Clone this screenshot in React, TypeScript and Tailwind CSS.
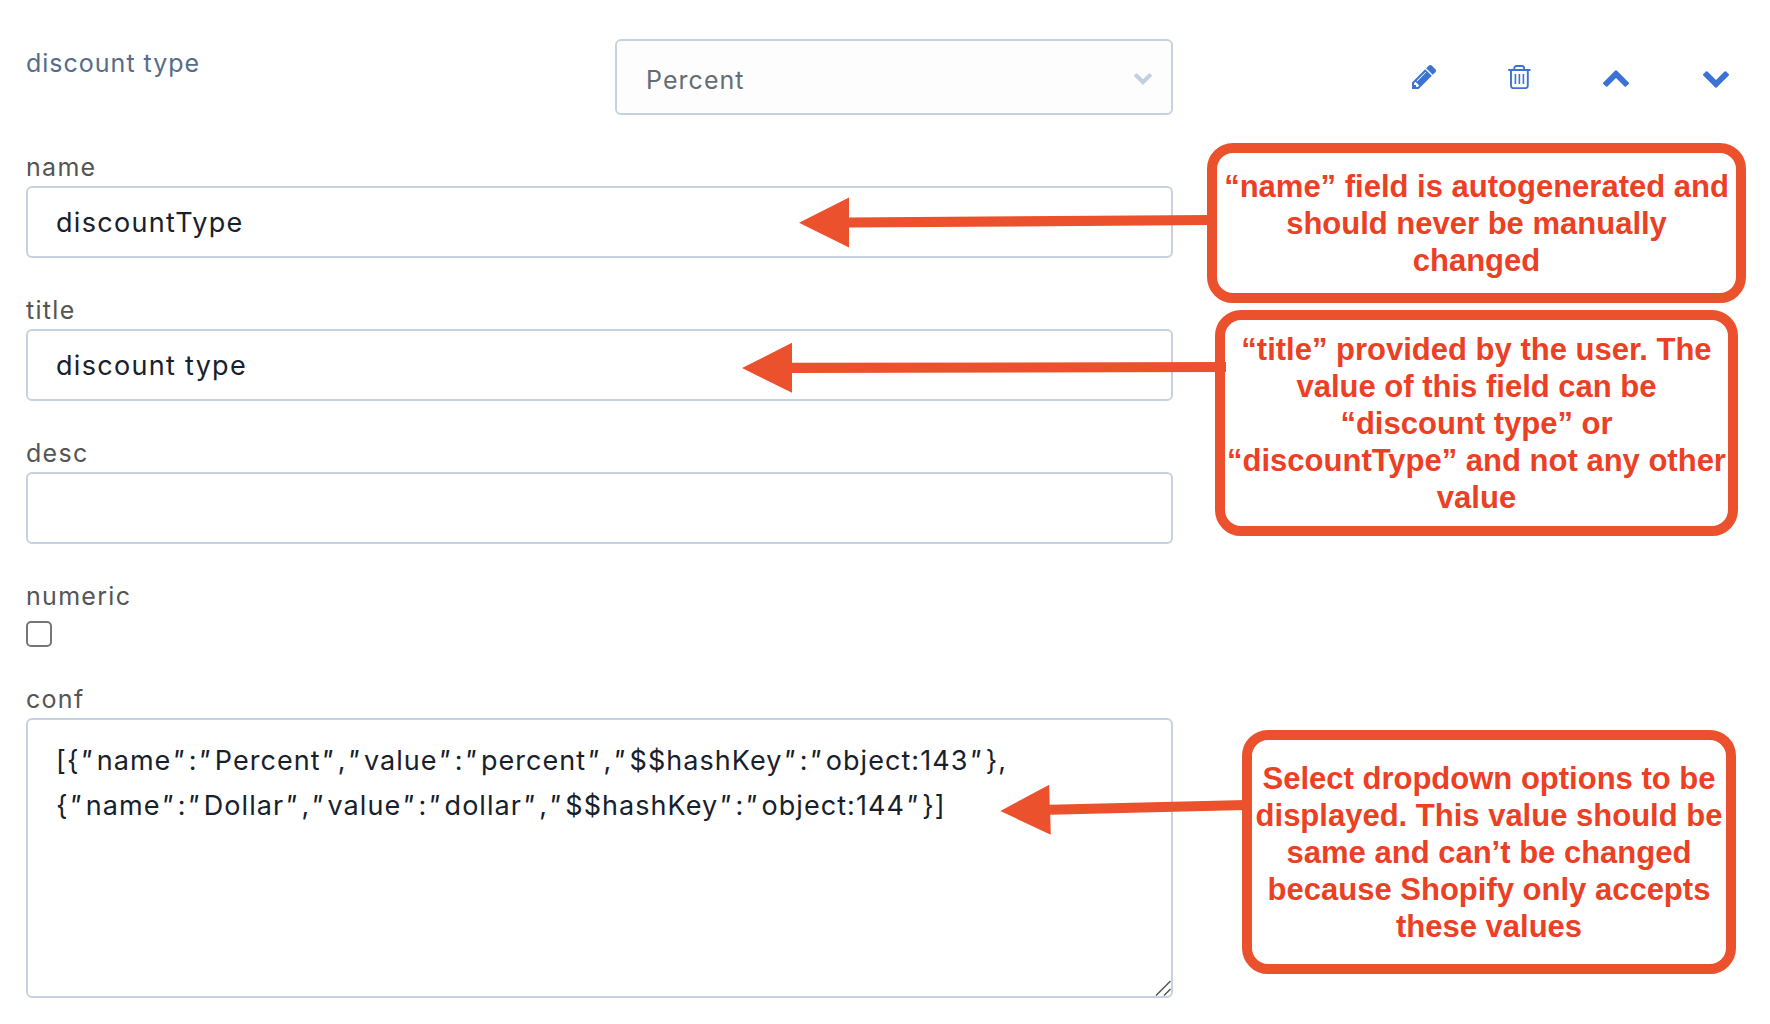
import type { ReactNode } from "react";

const CHEVRON_DOWN =
  "M1683 808l-742 741q-19 19-45 19t-45-19l-742-741q-19-19-19-45.5t19-45.5l166-165q19-19 45-19t45 19l531 531 531-531q19-19 45-19t45 19l166 165q19 19 19 45.5t-19 45.5z";
const CHEVRON_UP =
  "M1683 1331l-166 165q-19 19-45 19t-45-19l-531-531-531 531q-19 19-45 19t-45-19l-166-165q-19-19-19-45.5t19-45.5l742-741q19-19 45-19t45 19l742 741q19 19 19 45.5t-19 45.5z";

function PencilIcon() {
  return (
    <svg className="h-6 w-6" viewBox="128 149 1515 1515" fill="currentColor">
      <path d="M491 1536l91-91-235-235-91 91v107h128v128h107zm523-928q0-22-22-22-10 0-17 7l-542 542q-7 7-7 17 0 22 22 22 10 0 17-7l542-542q7-7 7-17zm-54-192l416 416-832 832h-416v-416zm683 96q0 53-37 90l-166 166-416-416 166-165q36-38 90-38 53 0 91 38l235 234q37 39 37 91z" />
    </svg>
  );
}

function TrashIcon() {
  return (
    <svg className="h-6 w-[23px]" viewBox="0 0 23 24" fill="none" stroke="currentColor" strokeWidth="1.9">
      <path d="M0.3 5H22.5M6.3 5V3.4Q6.3 1 8.6 1h5.2q2.3 0 2.3 2.4V5" />
      <path d="M3 5V20.8Q3 23.1 5.2 23.1H17.6Q19.8 23.1 19.8 20.8V5" />
      <path d="M7.4 9V19M11.4 9V19M15.4 9V19" strokeWidth="1.6" />
    </svg>
  );
}

function Label({ children }: { children: ReactNode }) {
  return <div className="h-[30px] text-[25px] leading-[30px] tracking-[1.3px] text-[#555555]">{children}</div>;
}

function TextField({ label, value }: { label: string; value: string }) {
  return (
    <div className="flex flex-col gap-1">
      <Label>{label}</Label>
      <div className="flex h-[72px] items-center rounded-md border-2 border-[#c7d2e0] bg-white px-7 pt-[3px] text-[27px] tracking-[1.3px] text-[#17212b]">
        {value}
      </div>
    </div>
  );
}

/** Renders a JSON line with slanted, widely spaced quote marks. */
function JsonLine({ text }: { text: string }) {
  return (
    <div className="whitespace-nowrap">
      {text.split(/(")/).map((part, i) =>
        part === '"' ? (
          <span key={i} className="italic tracking-[4.65px]">
            "
          </span>
        ) : (
          part
        ),
      )}
    </div>
  );
}

function Callout({ className, lines }: { className: string; lines: string[] }) {
  return (
    <div
      className={`absolute flex flex-col items-center justify-center rounded-[26px] border-[10px] border-[#eb512d] bg-white font-['Liberation_Sans',Arial,sans-serif] text-[31px] leading-[37px] font-bold whitespace-nowrap text-[#ec4025] ${className}`}
    >
      {lines.map((line) => (
        <div key={line}>{line}</div>
      ))}
    </div>
  );
}

export default function App() {
  return (
    <div className="relative h-[1024px] w-[1770px] overflow-hidden bg-white pt-[39px] pl-[26px] font-['Inter',sans-serif] font-normal">
      <div className="flex flex-col gap-[37px]">
        <div className="flex h-[76px]">
          <div className="w-[589px] pt-[9px] text-[25px] leading-[30px] tracking-[1px] text-[#566c88]">
            discount type
          </div>
          <div className="flex w-[558px] items-center justify-between rounded-md border-2 border-[#c7d2e0] bg-[#fdfdfd] pr-[19px] pl-[29px] text-[25px] tracking-[1.05px] text-[#646c75]">
            <span className="pt-[7px]">Percent</span>
            <svg className="mt-1 h-3 w-[18px] text-[#c3cedf]" viewBox="90 533 1612 1035" fill="currentColor">
              <path d={CHEVRON_DOWN} />
            </svg>
          </div>
          <div className="ml-[239px] flex items-center text-[#3a73d2]">
            <PencilIcon />
            <div className="ml-[72px]">
              <TrashIcon />
            </div>
            <svg className="mt-[3px] ml-[72px] h-[17px] w-[26px]" viewBox="90 480 1612 1035" fill="currentColor">
              <path d={CHEVRON_UP} />
            </svg>
            <svg className="mt-[5px] ml-[74px] h-[17px] w-[26px]" viewBox="90 533 1612 1035" fill="currentColor">
              <path d={CHEVRON_DOWN} />
            </svg>
          </div>
        </div>

        <div className="flex w-[1147px] flex-col gap-[37px]">
          <TextField label="name" value="discountType" />
          <TextField label="title" value="discount type" />
          <TextField label="desc" value="" />
          <div className="flex flex-col gap-2.5">
            <Label>numeric</Label>
            <div className="h-[26px] w-[26px] rounded-[5px] border-2 border-[#767676] bg-white" />
          </div>
          <div className="flex flex-col gap-1">
            <Label>conf</Label>
            <div className="relative h-[280px] rounded-md border-2 border-[#c7d2e0] bg-white px-7 pt-[18px] text-[27px] leading-[45px] tracking-[1.05px] text-[#17212b]">
              <JsonLine text={'[{"name":"Percent","value":"percent","$$hashKey":"object:143"},'} />
              <JsonLine text={'{"name":"Dollar","value":"dollar","$$hashKey":"object:144"}]'} />
              <svg
                className="absolute right-0 bottom-0 h-4 w-4"
                viewBox="0 0 16 16"
                fill="none"
                stroke="#555"
                strokeWidth="1.5"
              >
                <path d="M1 15.5L15.5 1M9 15.5L15.5 9" />
              </svg>
            </div>
          </div>
        </div>
      </div>

      <Callout
        className="top-[143px] left-[1207px] h-[160px] w-[539px]"
        lines={["“name” field is autogenerated and", "should never be manually", "changed"]}
      />
      <Callout
        className="top-[310px] left-[1215px] h-[226px] w-[523px]"
        lines={[
          "“title” provided by the user. The",
          "value of this field can be",
          "“discount type” or",
          "“discountType” and not any other",
          "value",
        ]}
      />
      <Callout
        className="top-[730px] left-[1242px] h-[244px] w-[494px]"
        lines={[
          "Select dropdown options to be",
          "displayed. This value should be",
          "same and can’t be changed",
          "because Shopify only accepts",
          "these values",
        ]}
      />

      {/* Arrows from the callouts to the fields they describe */}
      <svg className="absolute top-0 left-0 h-[1024px] w-[1770px]" viewBox="0 0 1770 1024" fill="#eb512d">
        <path d="M799 222.7L849 197.5V217.4L1210 215V225L849 227.6V247.5Z" />
        <path d="M742 368L792 342.8V362.8L1226 362V372L792 373V392.8Z" />
        <path d="M1000.3 811L1049.2 784.8L1049.7 804.8L1246 800V810L1050.2 814.8L1050.8 834.8Z" />
      </svg>
    </div>
  );
}
